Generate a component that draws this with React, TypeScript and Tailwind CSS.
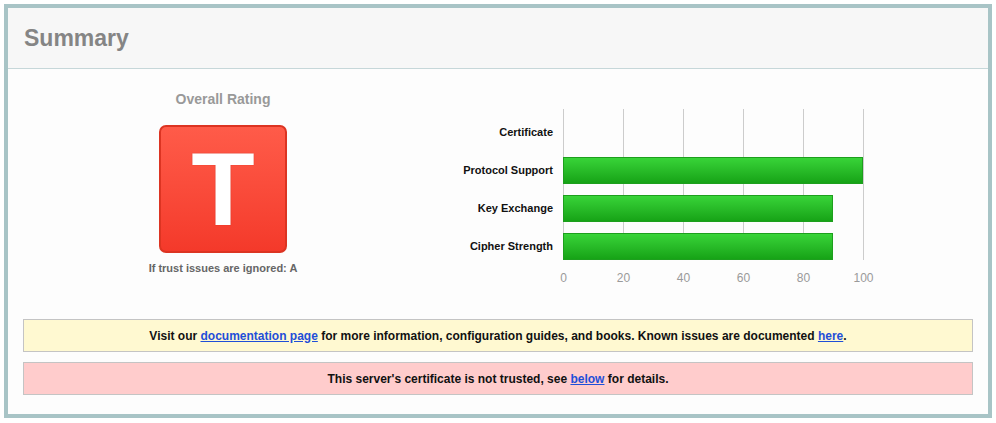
import React from 'react'

interface Bar {
  label: string
  value: number
}

const bars: Bar[] = [
  { label: 'Certificate', value: 0 },
  { label: 'Protocol Support', value: 100 },
  { label: 'Key Exchange', value: 90 },
  { label: 'Cipher Strength', value: 90 },
]

const ticks = [0, 20, 40, 60, 80, 100]

const RatingChart: React.FC = () => {
  return (
    <div className="flex flex-col pt-[40px]">
      <div className="relative flex">
        {/* grid lines */}
        <div className="absolute left-[125px] top-0 bottom-0 flex w-[301px] justify-between">
          {ticks.map((t) => (
            <div key={t} className="h-full w-px bg-[#cccccc]" />
          ))}
        </div>
        <div className="relative flex flex-col gap-[11px] pt-[10px]">
          {bars.map((b) => (
            <div key={b.label} className="flex h-[27px] items-center">
              <div className="mr-[10px] w-[115px] text-right text-[11px] font-bold leading-[13px] text-[#111]">
                {b.label}
              </div>
              <div className="flex h-full w-[301px]">
                {b.value > 0 && (
                  <div
                    className="h-full border border-[#1d9f1d] bg-gradient-to-b from-[#38d438] to-[#16a316]"
                    style={{ width: `${(b.value / 100) * 300}px` }}
                  />
                )}
              </div>
            </div>
          ))}
        </div>
      </div>
      {/* axis */}
      <div className="ml-[125px] mt-[11px] flex w-[301px] justify-between">
        {ticks.map((t) => (
          <div key={t} className="flex w-px justify-center">
            <span className="whitespace-nowrap text-[12px] leading-[14px] text-[#9a9a9a]">{t}</span>
          </div>
        ))}
      </div>
    </div>
  )
}

const App: React.FC = () => {
  return (
    <div className="min-h-screen bg-white p-1 font-['Liberation_Sans',Arial,Helvetica,sans-serif]">
      <div className="flex h-[414px] w-[988px] flex-col border-4 border-[#a8c4c6] bg-[#fdfdfd]">
        {/* Header */}
        <div className="flex h-[61px] items-center border-b border-[#c6d7d9] bg-[#f7f7f7] pl-[16px]">
          <h1 className="text-[23px] font-bold leading-none text-[#858585]">Summary</h1>
        </div>

        {/* Rating + chart */}
        <div className="flex h-[235px]">
          <div className="flex w-[430px] flex-col items-center pt-[22px]">
            <div className="text-[14px] font-bold leading-[16px] text-[#999999]">Overall Rating</div>
            <div className="mt-[18px] flex h-[128px] w-[128px] items-center justify-center rounded-[7px] border-2 border-[#dc3422] bg-gradient-to-b from-[#ff5b49] to-[#f4392a]">
              <span className="text-[104px] font-bold leading-none text-white [text-shadow:0_0_1px_#c81e10]">
                T
              </span>
            </div>
            <div className="mt-[9px] text-[11px] font-bold leading-[13px] text-[#666666]">
              If trust issues are ignored: A
            </div>
          </div>
          <RatingChart />
        </div>

        {/* Notices */}
        <div className="flex flex-col gap-[10px] px-[15px] pt-[15px]">
          <div className="flex h-[33px] items-center justify-center border border-[#c4c4c4] bg-[#fff9d1] text-[12px] font-bold text-[#111]">
            <span>
              Visit our{' '}
              <a href="#" className="text-[#1f4fd8] underline">
                documentation page
              </a>{' '}
              for more information, configuration guides, and books. Known issues are documented{' '}
              <a href="#" className="text-[#1f4fd8] underline">
                here
              </a>
              .
            </span>
          </div>
          <div className="flex h-[33px] items-center justify-center border border-[#c4c4c4] bg-[#ffcccc] text-[12px] font-bold text-[#111]">
            <span>
              This server's certificate is not trusted, see{' '}
              <a href="#" className="text-[#1f4fd8] underline">
                below
              </a>{' '}
              for details.
            </span>
          </div>
        </div>
      </div>
    </div>
  )
}

export default App
